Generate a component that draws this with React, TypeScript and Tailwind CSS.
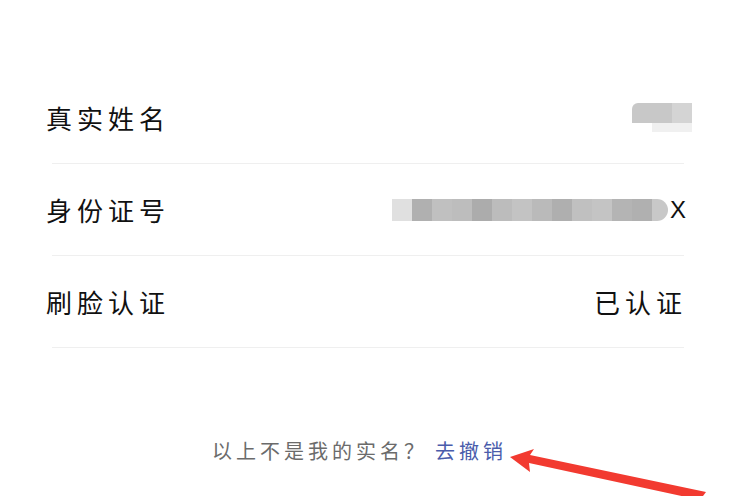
const idBlocks = [
  'bg-[#e0e0e0]',
  'bg-[#b0b0b0]',
  'bg-[#c0c0c0]',
  'bg-[#bdbdbd]',
  'bg-[#acacac]',
  'bg-[#bcbcbc]',
  'bg-[#c3c3c3]',
  'bg-[#bababa]',
  'bg-[#afafaf]',
  'bg-[#c0c0c0]',
  'bg-[#c4c4c4]',
  'bg-[#b4b4b4]',
  'bg-[#b0b0b0]',
];

function Row({ label, children }: { label: string; children: React.ReactNode }) {
  return (
    <div className="flex h-[92px] flex-col">
      <div className="flex h-[91px] items-center justify-between pl-[46px] pr-[62px]">
        <span className="text-[26px] tracking-[5px] text-[#111]">{label}</span>
        {children}
      </div>
      <div className="ml-[52px] mr-[64px] h-px bg-[#efefef]" />
    </div>
  );
}

export default function App() {
  return (
    <div
      className="relative h-[496px] w-[748px] overflow-hidden bg-white"
      style={{ fontFamily: '"Noto Sans CJK SC", "Noto Sans", sans-serif' }}
    >
      <div className="pt-[72px]">
        <Row label="真实姓名">
          <div className="mr-[-6px] flex flex-col">
            <div className="flex h-[20px]">
              <div className="w-[40px] rounded-tl-[6px] bg-[#c8c8c8]" />
              <div className="w-[20px] bg-[#d4d4d4]" />
            </div>
            <div className="ml-[20px] h-[9px] w-[40px] bg-[#f0f0f0]" />
          </div>
        </Row>
        <Row label="身份证号">
          <div className="flex items-center">
            <div className="flex h-[22px]">
              {idBlocks.map((c, i) => (
                <div key={i} className={`w-[20px] ${c}`} />
              ))}
              <div className="w-[16px] rounded-r-full bg-[#c8c8c8]" />
            </div>
            <span
              className="ml-[2px] text-[24px] leading-none text-[#111]"
              style={{ fontFamily: '"Liberation Sans", sans-serif' }}
            >
              X
            </span>
          </div>
        </Row>
        <Row label="刷脸认证">
          <span className="mr-[-1px] text-[26px] tracking-[5px] text-[#111]">已认证</span>
        </Row>
      </div>

      <div className="mt-[88px] flex items-center pl-[212px] text-[20px] tracking-[4px]">
        <span className="text-[#6b6b6b]">以上不是我的实名？</span>
        <span className="ml-[7px] text-[#4a5cab]">去撤销</span>
      </div>

      <svg className="absolute left-0 top-0" width="748" height="496" viewBox="0 0 748 496">
        <polygon
          points="510,457 534,449 530,455 706,492 700,500 529,463 530,472"
          fill="#f23a30"
        />
      </svg>
    </div>
  );
}
